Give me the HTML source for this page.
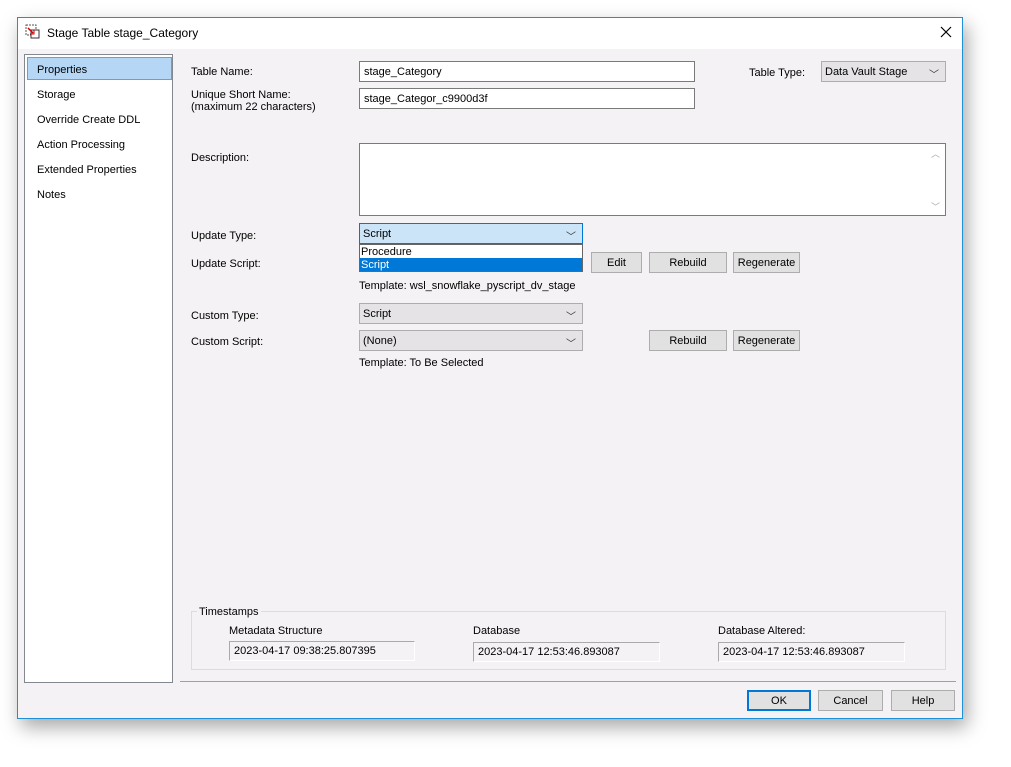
<!DOCTYPE html><html><head><style>
body{margin:0;width:1011px;height:767px;background:#fff;font-family:"Liberation Sans",sans-serif;font-size:11px;color:#000;position:relative;overflow:hidden}
.a{position:absolute}
.win{left:17px;top:17px;width:944px;height:700px;border:1px solid #1e90d8;background:#f5f2f5;box-shadow:4px 8px 18px rgba(0,0,0,.35)}
.tb{left:0;top:0;width:944px;height:31px;background:#fff}
.in{background:#fff;border:1px solid #7a7a7a;box-sizing:border-box;padding:4px 4px 0;font-size:11px}
.sel{background:#e5e3e6;border:1px solid #adadad;box-sizing:border-box;padding:4px 3px 0;font-size:11px}
.btn{background:#e1e1e1;border:1px solid #adadad;box-sizing:border-box;text-align:center;line-height:20px;font-size:11px}
.chev{position:absolute;right:6px;top:4px;font-size:10px;color:#333}
.ro{background:#f5f2f5;border:1px solid #aaa;border-right-color:#fff;border-bottom-color:#fff;box-sizing:border-box;padding:3px 4px 0}
</style></head><body>
<div class="a win">
<div class="a tb"></div>
</div>
<svg class="a" style="left:25px;top:24px" width="16" height="16"><rect x="1" y="1" width="10" height="10" fill="none" stroke="#555" stroke-dasharray="2,1"/><rect x="6" y="6" width="8" height="8" fill="#fff" stroke="#333"/><path d="M3 4 L8 9" stroke="#c00" stroke-width="1.5"/><path d="M9 6 L9 10 L5 10" fill="none" stroke="#c00"/></svg>
<div class="a" style="left:47px;top:26px;font-size:12px">Stage Table stage_Category</div>
<svg class="a" style="left:940px;top:26px" width="12" height="12"><path d="M1 1L11 11M11 1L1 11" stroke="#000" stroke-width="1.2"/></svg>
<div class="a" style="left:24px;top:54px;width:149px;height:629px;background:#fff;border:1px solid #828790;box-sizing:border-box"></div>
<div class="a" style="left:27px;top:57px;width:145px;height:23px;background:#b5d6f5;border:1px solid #5ea2de;box-sizing:border-box"></div>
<div class="a" style="left:37px;top:64px">Properties</div>
<div class="a" style="left:37px;top:89px">Storage</div>
<div class="a" style="left:37px;top:114px">Override Create DDL</div>
<div class="a" style="left:37px;top:139px">Action Processing</div>
<div class="a" style="left:37px;top:164px">Extended Properties</div>
<div class="a" style="left:37px;top:189px">Notes</div>

<div class="a" style="left:191px;top:66px">Table Name:</div>
<div class="a" style="left:191px;top:89px;line-height:12px">Unique Short Name:<br>(maximum 22 characters)</div>
<div class="a in" style="left:359px;top:61px;width:336px;height:21px">stage_Category</div>
<div class="a in" style="left:359px;top:88px;width:336px;height:21px">stage_Categor_c9900d3f</div>
<div class="a" style="left:749px;top:67px">Table Type:</div>
<div class="a sel" style="left:821px;top:61px;width:125px;height:21px">Data Vault Stage<span class="chev">﹀</span></div>
<div class="a" style="left:191px;top:152px">Description:</div>
<div class="a in" style="left:359px;top:143px;width:587px;height:73px"></div>
<div class="a" style="left:931px;top:147px;color:#aaa;font-size:9px">︿</div>
<div class="a" style="left:931px;top:200px;color:#aaa;font-size:9px">﹀</div>

<div class="a" style="left:191px;top:230px">Update Type:</div>
<div class="a sel" style="left:359px;top:223px;width:224px;height:21px;background:#cce4f7;border-color:#0078d7">Script<span class="chev">﹀</span></div>
<div class="a" style="left:359px;top:244px;width:224px;height:28px;background:#fff;border:1px solid #666;box-sizing:border-box"></div>
<div class="a" style="left:361px;top:246px">Procedure</div>
<div class="a" style="left:360px;top:258px;width:222px;height:13px;background:#0078d7"></div>
<div class="a" style="left:361px;top:259px;color:#fff">Script</div>
<div class="a" style="left:191px;top:258px">Update Script:</div>
<div class="a btn" style="left:591px;top:252px;width:51px;height:21px">Edit</div>
<div class="a btn" style="left:649px;top:252px;width:78px;height:21px">Rebuild</div>
<div class="a btn" style="left:733px;top:252px;width:67px;height:21px">Regenerate</div>
<div class="a" style="left:359px;top:280px">Template: wsl_snowflake_pyscript_dv_stage</div>

<div class="a" style="left:191px;top:310px">Custom Type:</div>
<div class="a sel" style="left:359px;top:303px;width:224px;height:21px">Script<span class="chev">﹀</span></div>
<div class="a" style="left:191px;top:336px">Custom Script:</div>
<div class="a sel" style="left:359px;top:330px;width:224px;height:21px">(None)<span class="chev">﹀</span></div>
<div class="a btn" style="left:649px;top:330px;width:78px;height:21px">Rebuild</div>
<div class="a btn" style="left:733px;top:330px;width:67px;height:21px">Regenerate</div>
<div class="a" style="left:359px;top:357px">Template: To Be Selected</div>

<div class="a" style="left:191px;top:611px;width:755px;height:59px;border:1px solid #dcdcdc;box-sizing:border-box"></div>
<div class="a" style="left:197px;top:606px;background:#f5f2f5;padding:0 2px">Timestamps</div>
<div class="a" style="left:229px;top:625px">Metadata Structure</div>
<div class="a" style="left:473px;top:625px">Database</div>
<div class="a" style="left:718px;top:625px">Database Altered:</div>
<div class="a ro" style="left:229px;top:641px;width:186px;height:20px">2023-04-17 09:38:25.807395</div>
<div class="a ro" style="left:473px;top:642px;width:187px;height:20px">2023-04-17 12:53:46.893087</div>
<div class="a ro" style="left:718px;top:642px;width:187px;height:20px">2023-04-17 12:53:46.893087</div>
<div class="a" style="left:180px;top:681px;width:776px;height:1px;background:#a0a0a0"></div>
<div class="a btn" style="left:747px;top:690px;width:64px;height:21px;border:2px solid #0078d7;line-height:19px">OK</div>
<div class="a btn" style="left:818px;top:690px;width:65px;height:21px">Cancel</div>
<div class="a btn" style="left:891px;top:690px;width:64px;height:21px">Help</div>
</body></html>
